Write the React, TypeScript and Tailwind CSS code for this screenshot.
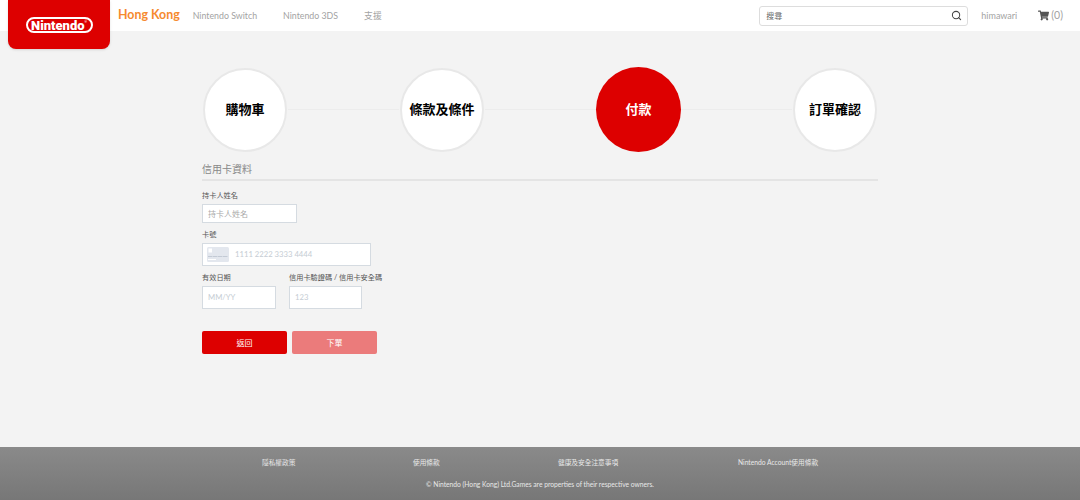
import React from 'react';
import { Search } from 'lucide-react';
import { FaShoppingCart } from 'react-icons/fa';

const latin = 'font-["Lato","Noto_Sans_CJK_TC",sans-serif]';

const steps = [
  { label: '購物車' },
  { label: '條款及條件' },
  { label: '付款', active: true },
  { label: '訂單確認' },
];

const App: React.FC = () => {
  return (
    <div className={`flex h-[500px] flex-col overflow-hidden bg-[#f3f3f3] ${latin}`}>
      {/* Header */}
      <header className="relative flex h-[31px] shrink-0 items-center bg-white pl-[118px] pr-[17px]">
        <div className="absolute left-2 top-0 flex h-[49px] w-[102px] items-end justify-center rounded-b-lg bg-[#dd0000] pb-[16px] shadow-sm">
          <div className="flex h-[16px] w-[67px] items-center justify-center rounded-full border-2 border-white font-['Roboto',sans-serif] text-[13px] font-black leading-none text-white">
            Nintendo
            <span className="mb-[5px] text-[3px] font-normal">®</span>
          </div>
        </div>
        <span className="text-[12.4px] font-bold text-[#f68a2e]">Hong Kong</span>
        <nav className="ml-[13px] flex items-center gap-[26px] text-[8.8px] text-[#a3a3a3]">
          <a>Nintendo Switch</a>
          <a>Nintendo 3DS</a>
          <a>支援</a>
        </nav>
        <div className="ml-auto flex h-[20px] w-[209px] items-center justify-between rounded-[3px] border border-[#ddd] bg-white pl-[6px] pr-[5px] text-[8px] text-[#666]">
          <span>搜尋</span>
          <Search size={11} strokeWidth={2.2} className="text-[#444]" />
        </div>
        <span className="ml-[13px] text-[9px] text-[#a3a3a3]">himawari</span>
        <div className="ml-[21px] flex items-center gap-[2px] text-[10.5px] text-[#a3a3a3]">
          <FaShoppingCart size={11} className="text-[#555]" />
          <span>(0)</span>
        </div>
      </header>

      {/* Checkout */}
      <main className="mx-auto w-[676px] flex-1 pt-[36px]">
        <div className="flex h-[85px] items-center">
          {steps.map((step, i) => (
            <React.Fragment key={step.label}>
              {i > 0 && <div className="h-px flex-1 bg-[#ececec]" />}
              <div
                className={
                  step.active
                    ? 'flex h-[85px] w-[85px] shrink-0 items-center justify-center rounded-full bg-[#dd0000] text-[13px] font-bold text-white'
                    : 'mx-px flex h-[84px] w-[84px] shrink-0 items-center justify-center rounded-full border-2 border-[#e8e8e8] bg-white text-[13px] font-bold text-black'
                }
              >
                {step.label}
              </div>
            </React.Fragment>
          ))}
        </div>

        <h2 className="mt-[10px] border-b-2 border-[#e4e4e4] pb-[2px] text-[10px] font-normal leading-[15px] text-[#888]">
          信用卡資料
        </h2>

        <label className="mt-[9px] block text-[7.2px] leading-[11px] text-[#555]">持卡人姓名</label>
        <div className="mt-[3px] flex h-[19px] w-[95px] items-center border border-[#d5dbe1] bg-white pl-[5px] text-[8px] text-[#aaa]">
          持卡人姓名
        </div>

        <label className="mt-[6px] block text-[7.2px] leading-[11px] text-[#555]">卡號</label>
        <div className="mt-[3px] flex h-[23px] w-[169px] items-center gap-[6px] border border-[#d5dbe1] bg-white pl-[4px] text-[7.7px] text-[#c5ccd3]">
          <svg width="22" height="15" viewBox="0 0 22 15">
            <rect width="22" height="15" rx="1.5" fill="#e3e7ee" />
            <rect x="1.5" y="1.5" width="3.5" height="4" fill="#fff" />
            <rect x="1" y="9" width="4.5" height="1" fill="#c3cad5" />
            <rect x="6" y="9" width="4.5" height="1" fill="#c3cad5" />
            <rect x="11" y="9" width="4.5" height="1" fill="#c3cad5" />
            <rect x="16" y="9" width="4.5" height="1" fill="#c3cad5" />
            <rect x="1" y="12" width="8" height="1" fill="#fff" />
          </svg>
          <span>1111 2222 3333 4444</span>
        </div>

        <div className="mt-[6px] flex gap-[13px]">
          <div>
            <label className="block text-[7.2px] leading-[11px] text-[#555]">有效日期</label>
            <div className="mt-[3px] flex h-[23px] w-[74px] items-center border border-[#d5dbe1] bg-white pl-[5px] text-[7.7px] text-[#c5ccd3]">
              MM/YY
            </div>
          </div>
          <div>
            <label className="block whitespace-nowrap text-[7.2px] leading-[11px] text-[#555]">
              信用卡驗證碼 / 信用卡安全碼
            </label>
            <div className="mt-[3px] flex h-[23px] w-[73px] items-center border border-[#d5dbe1] bg-white pl-[5px] text-[7.7px] text-[#c5ccd3]">
              123
            </div>
          </div>
        </div>

        <div className="mt-[22px] flex gap-[5px]">
          <button className="h-[23px] w-[85px] rounded-[2px] bg-[#dd0000] text-[8px] text-white">返回</button>
          <button className="h-[23px] w-[85px] rounded-[2px] bg-[#eb7b7b] text-[8px] text-white">下單</button>
        </div>
      </main>

      {/* Footer */}
      <footer className="h-[53px] shrink-0 bg-gradient-to-b from-[#8a8a8a] to-[#777777] pt-[10px] text-[6.7px] text-[#e8e8e8]">
        <div className="flex pl-[262px] leading-[10px]">
          <a className="w-[151px]">隱私權政策</a>
          <a className="w-[145px]">使用條款</a>
          <a className="w-[180px]">健康及安全注意事項</a>
          <a>Nintendo Account使用條款</a>
        </div>
        <p className="mt-[12px] text-center leading-[10px]">
          © Nintendo (Hong Kong) Ltd.Games are properties of their respective owners.
        </p>
      </footer>
    </div>
  );
};

export default App;
